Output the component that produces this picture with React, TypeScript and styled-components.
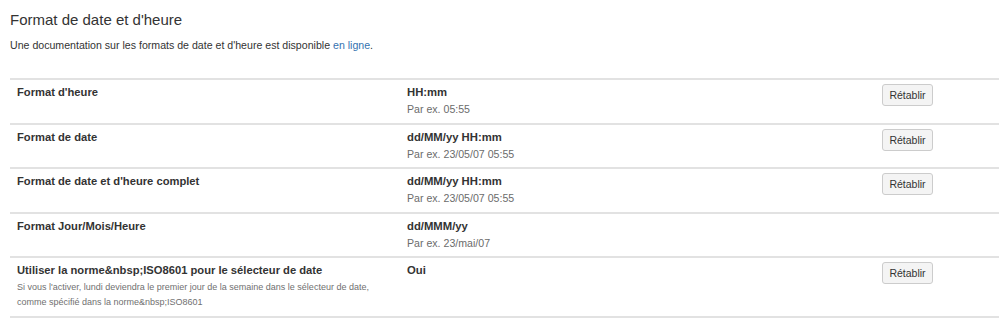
import styled, { createGlobalStyle } from 'styled-components';

const GlobalStyle = createGlobalStyle`
	body {
		margin: 0;
		background: #fff;
		font-family: 'Liberation Sans', Arial, sans-serif;
		color: #333;
	}
`;

const Page = styled.div`
	padding: 10px 0 0 10px;
`;
const Title = styled.h2`
	font-size: 15px;
	font-weight: normal;
	line-height: 20px;
	margin: 0 0 7px 0;
	color: #333;
`;
const Intro = styled.p`
	font-size: 10.6px;
	line-height: 16px;
	margin: 0 0 25px 0;
`;
const Link = styled.a`
	color: #3572b0;
	text-decoration: none;
`;
const Table = styled.div`
	border-top: 2px solid #e2e2e2;
`;
const Row = styled.div<{ tall?: boolean }>`
	display: grid;
	grid-template-columns: 390px 1fr 124px;
	border-bottom: 2px solid #e2e2e2;
	min-height: ${(p) => (p.tall ? '60px' : '44.5px')};
	box-sizing: border-box;
`;
const Cell = styled.div`
	padding: 4px 7px 2px 7px;
	font-size: 10.6px;
	line-height: 17px;
`;
const Label = styled.div`
	font-weight: bold;
	font-size: 11.2px;
`;
const Hint = styled.div`
	font-size: 9px;
	line-height: 15px;
	color: #707070;
	margin-top: 1px;
`;
const Value = styled.div`
	font-weight: bold;
	font-size: 11.3px;
`;
const Example = styled.div`
	color: #6b6b6b;
`;
const ResetButton = styled.button`
	font-family: 'Liberation Sans', Arial, sans-serif;
	font-size: 10.5px;
	color: #333;
	background: #f4f4f4;
	border: 1px solid #ccc;
	border-radius: 3px;
	height: 22px;
	width: 51px;
	padding: 0;
	cursor: pointer;
`;

interface FormatRow {
	label: string;
	hint?: string;
	value: string;
	example?: string;
	reset: boolean;
}

const rows: FormatRow[] = [
	{ label: "Format d'heure", value: 'HH:mm', example: 'Par ex. 05:55', reset: true },
	{ label: 'Format de date', value: 'dd/MM/yy HH:mm', example: 'Par ex. 23/05/07 05:55', reset: true },
	{ label: "Format de date et d'heure complet", value: 'dd/MM/yy HH:mm', example: 'Par ex. 23/05/07 05:55', reset: true },
	{ label: 'Format Jour/Mois/Heure', value: 'dd/MMM/yy', example: 'Par ex. 23/mai/07', reset: false },
	{
		label: 'Utiliser la norme&nbsp;ISO8601 pour le sélecteur de date',
		hint: "Si vous l'activer, lundi deviendra le premier jour de la semaine dans le sélecteur de date, comme spécifié dans la norme&nbsp;ISO8601",
		value: 'Oui',
		reset: true,
	},
];

export default function App() {
	return (
		<>
			<GlobalStyle />
			<Page>
				<Title>Format de date et d'heure</Title>
				<Intro>
					Une documentation sur les formats de date et d'heure est disponible <Link href="#">en ligne</Link>.
				</Intro>
				<Table>
					{rows.map((r) => (
						<Row key={r.label} tall={!!r.hint}>
							<Cell>
								<Label>{r.label}</Label>
								{r.hint && <Hint>{r.hint}</Hint>}
							</Cell>
							<Cell>
								<Value>{r.value}</Value>
								{r.example && <Example>{r.example}</Example>}
							</Cell>
							<Cell>{r.reset && <ResetButton>Rétablir</ResetButton>}</Cell>
						</Row>
					))}
				</Table>
			</Page>
		</>
	);
}
